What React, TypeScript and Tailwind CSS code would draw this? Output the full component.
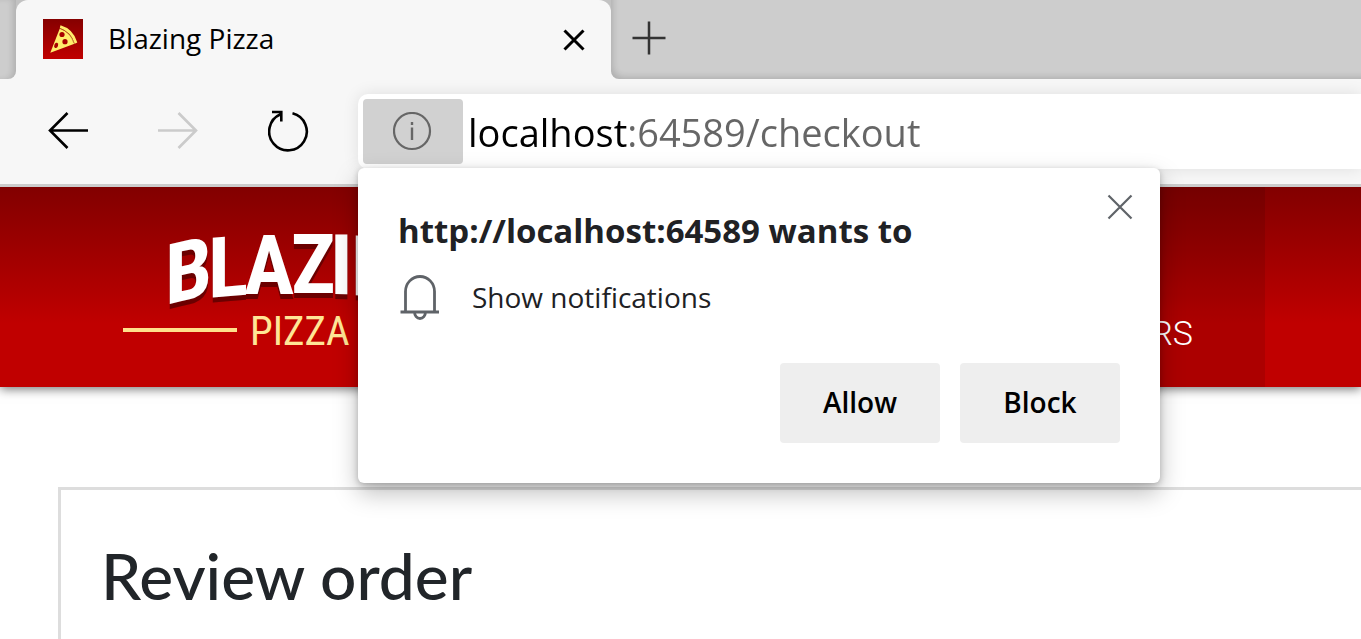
import { useState } from "react";

const wordmark = [
  { letter: "B", x: 43, y: 77, skew: -13 },
  { letter: "L", x: 86, y: 70, skew: -5 },
  { letter: "A", x: 122, y: 66, skew: 0 },
  { letter: "Z", x: 169, y: 65, skew: 0 },
  { letter: "I", x: 208, y: 66, skew: 1 },
  { letter: "N", x: 229, y: 67, skew: 3 },
  { letter: "G", x: 280, y: 71, skew: 8 },
];

function PizzaIcon() {
  return (
    <svg viewBox="0 0 40 40" className="size-10 shrink-0" aria-hidden="true">
      <defs>
        <linearGradient id="favicon" x1="0" y1="0" x2="0" y2="1">
          <stop offset="0" stopColor="#850000" />
          <stop offset="1" stopColor="#c00000" />
        </linearGradient>
      </defs>
      <rect width="40" height="40" fill="url(#favicon)" />
      <path d="M16.800 9.500 L7.300 33.700 L31.500 24.700 Q28.500 14 16.800 9.500Z" fill="#ffec6b" />
      <path d="M17.500 6.300 Q30.500 10 34.300 23.600 L31.700 24.800 Q28.500 13 16.800 9Z" fill="#ffec6b" />
      <path d="M17 9.500 Q27.500 13 31 24.300" fill="none" stroke="#b05020" strokeWidth="0.7" />
      <circle cx="19" cy="15.500" r="2.600" fill="#a80000" />
      <circle cx="22" cy="22.700" r="2.600" fill="#a80000" />
      <ellipse cx="13.300" cy="26.300" rx="1.900" ry="2.700" fill="#a80000" transform="rotate(20 13 26)" />
    </svg>
  );
}

function TabStrip() {
  return (
    <div className="flex h-[79px] bg-[#f7f7f7]">
      <div className="w-4 shrink-0 rounded-br-lg bg-[#cdcdcd] shadow-[inset_-5px_0_6px_-2px_rgba(0,0,0,0.14)]" />
      <div className="w-[595px] shrink-0 bg-[#c2c2c2]">
        <div className="flex h-full items-center rounded-t-xl bg-[#f7f7f7] pr-[21px] pb-[2px] pl-[27px]">
          <PizzaIcon />
          <span className="ml-[25px] grow pb-[2px] text-[28px] leading-10 text-black">Blazing Pizza</span>
          <button type="button" aria-label="Close tab" className="pt-[2px] pr-1">
            <svg viewBox="0 0 24 24" className="size-6" stroke="#000" strokeWidth="3" aria-hidden="true">
              <path d="M2.500 2.500 L21.500 21.500 M21.500 2.500 L2.500 21.500" />
            </svg>
          </button>
        </div>
      </div>
      <div className="flex grow items-center rounded-bl-lg bg-[#cdcdcd] pb-[2px] pl-5 shadow-[inset_5px_-5px_6px_-3px_rgba(0,0,0,0.14)]">
        <button type="button" aria-label="New tab">
          <svg viewBox="0 0 36 36" className="size-9" stroke="#333" strokeWidth="2.500" aria-hidden="true">
            <path d="M1.500 17 H34.500 M18 0.500 V33.500" />
          </svg>
        </button>
      </div>
    </div>
  );
}

function Toolbar({ children }: { children: React.ReactNode }) {
  return (
    <div className="relative z-10 flex h-[108px] items-start border-b-3 border-[#cccccc] bg-[#f7f7f7] pt-[15px] pl-12">
      <div className="flex h-[73px] w-[310px] shrink-0 items-center gap-[68px]">
        <button type="button" aria-label="Back">
          <svg viewBox="0 0 42 42" className="size-[42px]" fill="none" stroke="#000" strokeWidth="2.600" aria-hidden="true">
            <path d="M1.500 20.500 H40 M19.500 3 L2 20.500 L19.500 38" />
          </svg>
        </button>
        <button type="button" aria-label="Forward" disabled>
          <svg viewBox="0 0 42 42" className="size-[42px]" fill="none" stroke="#cbcbcb" strokeWidth="2.600" aria-hidden="true">
            <path d="M0 20.500 H38.500 M20.500 3 L38 20.500 L20.500 38" />
          </svg>
        </button>
        <button type="button" aria-label="Refresh">
          <svg viewBox="0 0 42 42" className="size-[42px]" fill="none" stroke="#000" strokeWidth="2.600" aria-hidden="true">
            <path d="M24.500 3.300 A18.800 18.800 0 1 1 12.500 4.300 M4 2 H13.300 V11.500" />
          </svg>
        </button>
      </div>
      <div className="relative min-w-0 grow">
        <div className="flex h-[75px] items-center rounded-l-[10px] bg-white pl-[5px] shadow-[0_0_16px_rgba(0,0,0,0.1)]">
          <button
            type="button"
            aria-label="View site information"
            className="flex h-[65px] w-[100px] shrink-0 items-center justify-center rounded bg-[#d1d1d1]"
          >
            <svg viewBox="0 0 40 40" className="size-10" fill="none" stroke="#666" aria-hidden="true">
              <circle cx="19" cy="19" r="18" strokeWidth="2.200" />
              <path d="M19 15.500 V28" strokeWidth="2.400" />
              <path d="M19 10 V13" strokeWidth="2.400" />
            </svg>
          </button>
          <input
            type="text"
            aria-label="Address"
            defaultValue="localhost:64589/checkout"
            className="min-w-0 grow bg-[linear-gradient(to_right,#000_165px,#666_165px)] bg-clip-text pl-[5px] text-[38px] leading-[50px] text-transparent caret-black outline-none"
          />
        </div>
        {children}
      </div>
    </div>
  );
}

function PermissionDialog({ onClose }: { onClose: () => void }) {
  return (
    <div
      role="dialog"
      aria-labelledby="permission-title"
      className="absolute top-[74px] left-0 z-20 w-[802px] rounded-md bg-white p-10 shadow-[0_10px_24px_rgba(0,0,0,0.26),0_2px_6px_rgba(0,0,0,0.22)]"
    >
      <button type="button" aria-label="Close" onClick={onClose} className="absolute top-[26px] right-[27px]">
        <svg viewBox="0 0 26 26" className="size-[26px]" stroke="#5f6368" strokeWidth="2.200" aria-hidden="true">
          <path d="M1.500 1.500 L24.500 24.500 M24.500 1.500 L1.500 24.500" />
        </svg>
      </button>
      <h2 id="permission-title" className="text-[33px] leading-[46px] font-bold text-[#202124]">
        http://localhost:64589 wants to
      </h2>
      <div className="mt-5 flex h-12 items-center gap-8 pl-[2px]">
        <svg viewBox="0 0 40 46" className="h-[46px] w-10" fill="none" stroke="#5f6368" strokeWidth="2.800" aria-hidden="true">
          <path d="M5.500 36 V16.500 A14.500 15 0 0 1 34.500 16.500 V36 M0.500 37 H39 M14.500 37 A5.500 6.500 0 0 0 25.500 37" />
        </svg>
        <span className="pb-[2px] text-[28px] leading-10 text-[#202124]">Show notifications</span>
      </div>
      <div className="mt-[41px] flex justify-end gap-5 text-[28px] font-semibold text-black">
        <button type="button" onClick={onClose} className="h-20 w-40 rounded bg-[#eeeeee] pb-[2px]">
          Allow
        </button>
        <button type="button" onClick={onClose} className="h-20 w-40 rounded bg-[#eeeeee] pb-[2px]">
          Block
        </button>
      </div>
    </div>
  );
}

function Logo() {
  return (
    <svg viewBox="0 0 350 130" className="h-[130px] w-[350px] shrink-0 overflow-visible" role="img" aria-label="Blazing Pizza">
      <g
        className="drop-shadow-[0_5px_0_#6b0000]"
        fill="#fff"
        fontFamily="'Roboto Condensed', 'Open Sans Condensed', 'Noto Sans Condensed', Roboto, sans-serif"
        fontWeight="700"
        fontSize="84"
      >
        {wordmark.map((g) => (
          <text key={g.letter} transform={`translate(${g.x} ${g.y}) skewY(${g.skew})`}>
            {g.letter}
          </text>
        ))}
      </g>
      <path d="M1 102 H115 M237 102 H349" stroke="#ffe08a" strokeWidth="4" />
      <text
        x="128"
        y="117"
        fill="#ffe596"
        fontSize="41"
        fontFamily="'Roboto Condensed', 'Open Sans Condensed', 'Noto Sans Condensed', Roboto, sans-serif"
      >
        PIZZA
      </text>
    </svg>
  );
}

export default function App() {
  const [asking, setAsking] = useState(true);
  return (
    <div className="min-h-screen overflow-hidden bg-white font-['Open_Sans','Noto_Sans',sans-serif]">
      <TabStrip />
      <Toolbar>{asking && <PermissionDialog onClose={() => setAsking(false)} />}</Toolbar>
      <header className="flex h-[200px] justify-between bg-linear-to-b from-[#820000] to-[#c00000] to-68% pr-24 pl-[122px] shadow-[0_2px_10px_rgba(0,0,0,0.55)]">
        <div className="flex pt-[41px]">
          <Logo />
        </div>
        <nav className="flex">
          <a
            href="#orders"
            className="flex items-end bg-black/10 px-[72px] pb-[30px] font-[Roboto,sans-serif] text-[34px] leading-[48px] font-light text-white"
          >
            MY ORDERS
          </a>
        </nav>
      </header>
      <main className="pt-[100px] pl-[58px]">
        <section className="h-[152px] border-t-3 border-l-3 border-[#dddddd] pt-12 pl-10">
          <h1 className="font-[Lato,sans-serif] text-[64px] leading-[76px] font-medium text-[#212529]">Review order</h1>
        </section>
      </main>
    </div>
  );
}
